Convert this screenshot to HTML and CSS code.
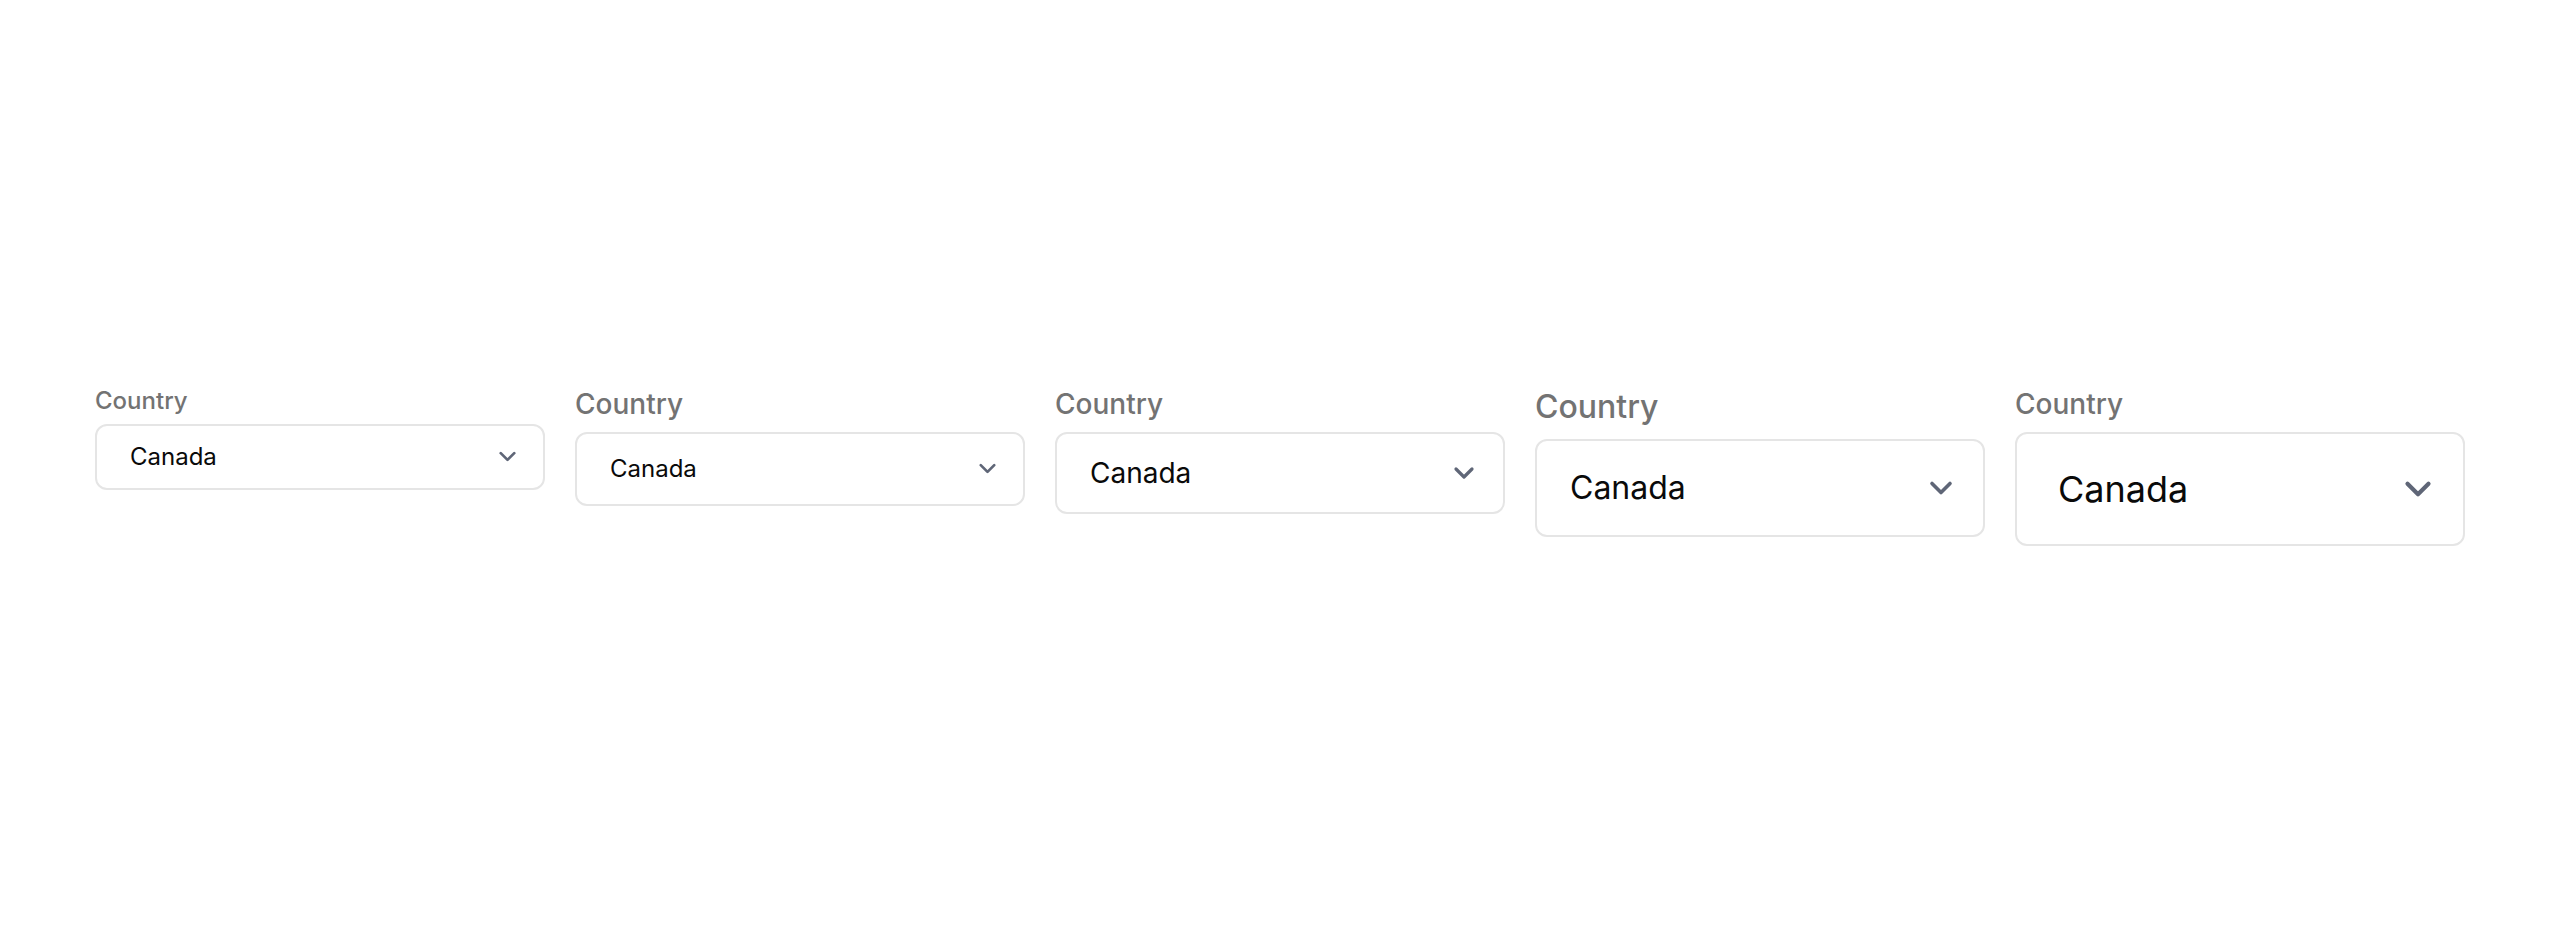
FILE: index.html
```html
<!DOCTYPE html>
<html lang="en">
<head>
<meta charset="utf-8">
<title>Country selects</title>
<link rel="stylesheet" href="styles.css">
</head>
<body>
<main class="row">
  <div class="field field-1">
    <label class="label">Country</label>
    <div class="select">
      <span class="value">Canada</span>
      <svg class="chev" viewBox="0 0 24 24" fill="none" stroke="currentColor" stroke-width="2.4" stroke-linecap="round" stroke-linejoin="round"><polyline points="6 9 12 15 18 9"/></svg>
    </div>
  </div>
  <div class="field field-2">
    <label class="label">Country</label>
    <div class="select">
      <span class="value">Canada</span>
      <svg class="chev" viewBox="0 0 24 24" fill="none" stroke="currentColor" stroke-width="2.4" stroke-linecap="round" stroke-linejoin="round"><polyline points="6 9 12 15 18 9"/></svg>
    </div>
  </div>
  <div class="field field-3">
    <label class="label">Country</label>
    <div class="select">
      <span class="value">Canada</span>
      <svg class="chev" viewBox="0 0 24 24" fill="none" stroke="currentColor" stroke-width="2.4" stroke-linecap="round" stroke-linejoin="round"><polyline points="6 9 12 15 18 9"/></svg>
    </div>
  </div>
  <div class="field field-4">
    <label class="label">Country</label>
    <div class="select">
      <span class="value">Canada</span>
      <svg class="chev" viewBox="0 0 24 24" fill="none" stroke="currentColor" stroke-width="2.4" stroke-linecap="round" stroke-linejoin="round"><polyline points="6 9 12 15 18 9"/></svg>
    </div>
  </div>
  <div class="field field-5">
    <label class="label">Country</label>
    <div class="select">
      <span class="value">Canada</span>
      <svg class="chev" viewBox="0 0 24 24" fill="none" stroke="currentColor" stroke-width="2.4" stroke-linecap="round" stroke-linejoin="round"><polyline points="6 9 12 15 18 9"/></svg>
    </div>
  </div>
</main>
</body>
</html>
```

FILE: styles.css
```css
* { box-sizing: border-box; }

html, body {
  margin: 0;
  padding: 0;
  background: #ffffff;
}

body {
  min-height: 100vh;
  display: flex;
  align-items: center;
  justify-content: center;
  font-family: Inter, "Noto Sans", "Liberation Sans", sans-serif;
}

.row {
  display: flex;
  align-items: flex-start;
  gap: 30px;
}

.field {
  width: 450px;
  display: flex;
  flex-direction: column;
}

.label {
  color: #737373;
  font-weight: 500;
  line-height: 1.5;
  margin-bottom: 0.25em;
}

.select {
  display: flex;
  align-items: center;
  justify-content: space-between;
  border: 2px solid #e5e5e5;
  border-radius: 12px;
  background: #fff;
  color: #0a0a0a;
  line-height: 1.5;
}

.value { font-weight: 400; }

.chev {
  color: #5f6677;
  flex: none;
}

.field-1 .label { font-size: 24px; margin-bottom: 5px; }
.field-1 .select { font-size: 24px; padding: 13px 22px 13px 33px; }
.field-1 .chev { width: 27px; height: 27px; }

.field-2 .label { font-size: 28px; }
.field-2 .select { font-size: 24px; padding: 17px 22px 17px 33px; }
.field-2 .chev { width: 27px; height: 27px; }

.field-3 .label { font-size: 28px; }
.field-3 .select { font-size: 28px; padding: 18px 23px 18px 33px; }
.field-3 .chev { width: 32px; height: 32px; }

.field-4 .label { font-size: 32px; }
.field-4 .select { font-size: 32px; padding: 23px 24px 23px 33px; }
.field-4 .chev { width: 36px; height: 36px; }

.field-5 .label { font-size: 28px; }
.field-5 .select { font-size: 36px; padding: 28px 24px 28px 41px; }
.field-5 .chev { width: 42px; height: 42px; }
```
